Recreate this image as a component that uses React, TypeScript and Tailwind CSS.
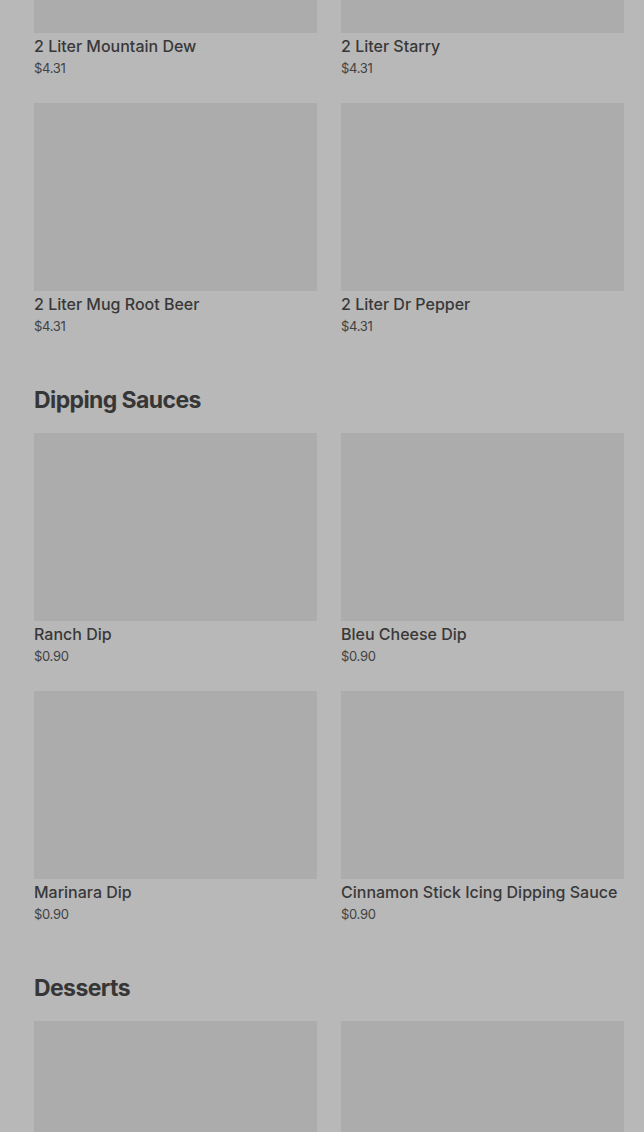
import React from "react";

type Item = { name: string; price: string };

const Card = ({ item }: { item: Item }) => (
  <div className="flex flex-col">
    <div className="h-[188px] w-full bg-[#acacac]" />
    <div className="mt-[3px] text-[16px] leading-[20px] text-[#383838] font-medium whitespace-nowrap">{item.name}</div>
    <div className="mt-[3px] text-[13px] leading-[18px] text-[#424242] tracking-[-0.3px]">{item.price}</div>
  </div>
);

const Grid = ({ items }: { items: Item[] }) => (
  <div className="grid grid-cols-2 gap-x-[24px] gap-y-[26px]">
    {items.map((it) => (
      <Card key={it.name} item={it} />
    ))}
  </div>
);

const Heading = ({ children }: { children: React.ReactNode }) => (
  <h2 className="mt-[49px] mb-[17px] text-[23px] leading-[32px] font-bold text-[#363636] tracking-[-0.6px]">{children}</h2>
);

export default function App() {
  const drinks: Item[] = [
    { name: "2 Liter Mountain Dew", price: "$4.31" },
    { name: "2 Liter Starry", price: "$4.31" },
    { name: "2 Liter Mug Root Beer", price: "$4.31" },
    { name: "2 Liter Dr Pepper", price: "$4.31" },
  ];
  const sauces: Item[] = [
    { name: "Ranch Dip", price: "$0.90" },
    { name: "Bleu Cheese Dip", price: "$0.90" },
    { name: "Marinara Dip", price: "$0.90" },
    { name: "Cinnamon Stick Icing Dipping Sauce", price: "$0.90" },
  ];
  return (
    <div
      className="w-[644px] h-[1132px] overflow-hidden bg-[#b8b8b8]"
      style={{ fontFamily: "Inter, 'Noto Sans', sans-serif" }}
    >
      <div className="pl-[34px] pr-[20px] mt-[-155px]">
        <Grid items={drinks} />
        <Heading>Dipping Sauces</Heading>
        <Grid items={sauces} />
        <Heading>Desserts</Heading>
        <div className="grid grid-cols-2 gap-x-[24px]">
          <div className="h-[188px] w-full bg-[#acacac]" />
          <div className="h-[188px] w-full bg-[#acacac]" />
        </div>
      </div>
    </div>
  );
}
